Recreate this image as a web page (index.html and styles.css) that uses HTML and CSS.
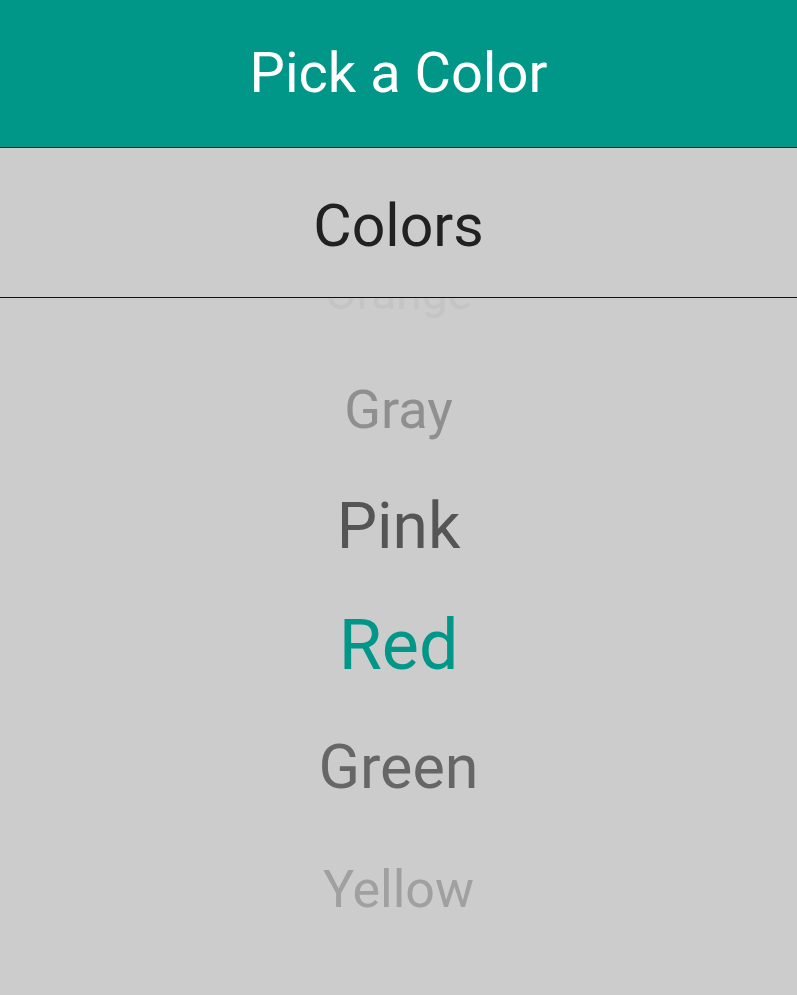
FILE: index.html
```html
<!DOCTYPE html>
<html>
<head>
<meta charset="utf-8">
<link rel="stylesheet" href="styles.css">
</head>
<body>
<header class="appbar">Pick a Color</header>
<section class="title">Colors</section>
<div class="picker">
  <ul class="wheel">
    <li class="item orange">Orange</li>
    <li class="item gray">Gray</li>
    <li class="item pink">Pink</li>
    <li class="item red">Red</li>
    <li class="item green">Green</li>
    <li class="item yellow">Yellow</li>
  </ul>
</div>
</body>
</html>
```
FILE: styles.css
```css
html, body {
  margin: 0;
  padding: 0;
  background: #cccccc;
  font-family: Roboto, "Noto Sans", sans-serif;
}
.appbar {
  height: 147px;
  line-height: 147px;
  background: #009688;
  color: #ffffff;
  text-align: center;
  font-size: 56px;
  border-bottom: 1px solid #1a1a1a;
}
.title {
  box-sizing: border-box;
  height: 150px;
  padding-top: 7px;
  line-height: 142px;
  text-align: center;
  font-size: 59px;
  color: #212121;
  border-bottom: 1px solid #111;
}
.picker {
  height: 697px;
  overflow: hidden;
}
.wheel {
  list-style: none;
  margin: -64px 0 0 0;
  padding: 0;
  display: flex;
  flex-direction: column;
}
.item {
  text-align: center;
}
.orange { height: 118px; line-height: 118px; font-size: 46px; color: #c4c4c4; }
.gray   { height: 116px; line-height: 116px; font-size: 54px; color: #8f8f8f; }
.pink   { height: 117px; line-height: 117px; font-size: 64px; color: #555555; }
.red    { height: 121px; line-height: 121px; font-size: 70px; color: #009688; }
.green  { height: 123px; line-height: 123px; font-size: 61px; color: #666666; }
.yellow { height: 122px; line-height: 122px; font-size: 52px; color: #a0a0a0; }
```
